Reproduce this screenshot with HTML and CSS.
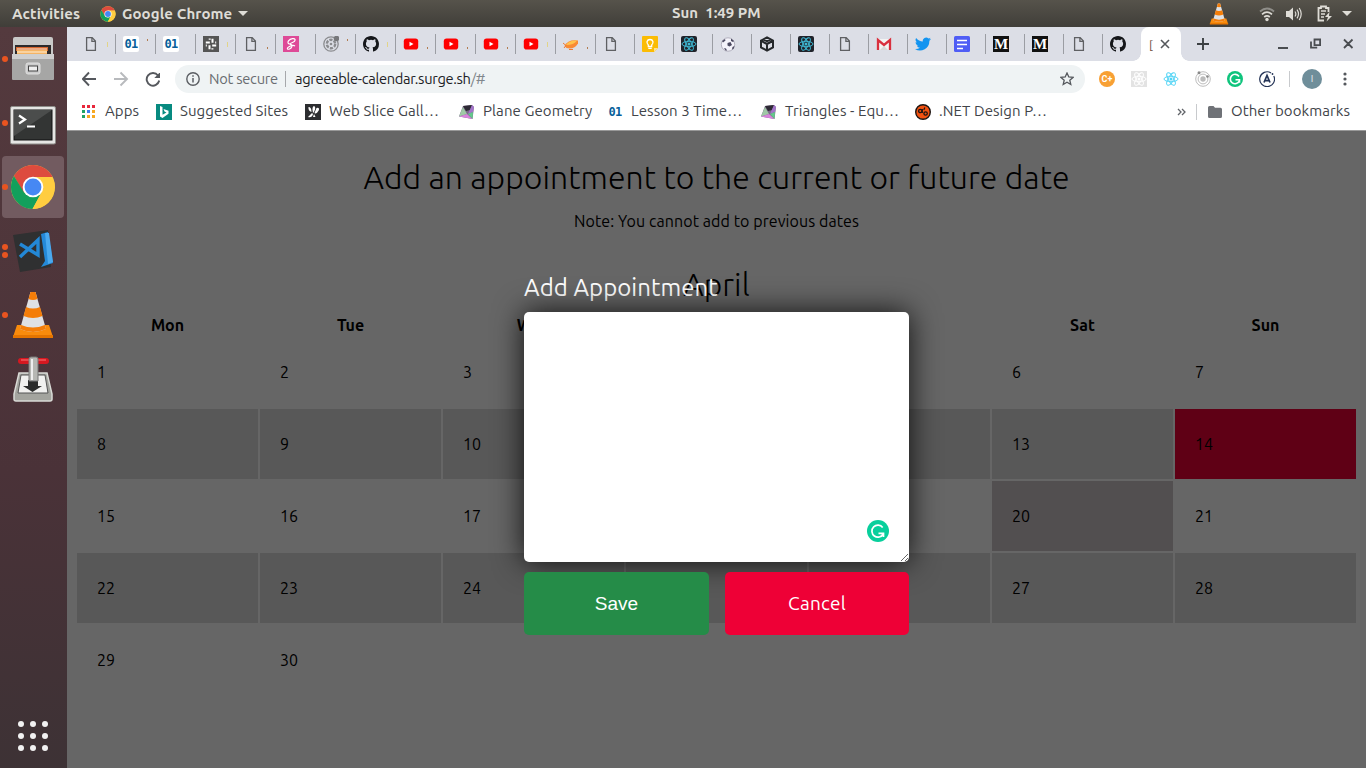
FILE: index.html
```html
<!DOCTYPE html>
<html lang="en">
<head>
<meta charset="utf-8">
<title>Calendar</title>
<link rel="stylesheet" href="styles.css">
</head>
<body>
<svg class="defs" width="0" height="0">
  <symbol id="page" viewBox="0 0 16 16"><path d="M3.6 1.6h5.600l3.200 3.400v9.400H3.600zM8.900 1.800v3.500h3.400" fill="none" stroke="#5f6063" stroke-width="1.300"/></symbol>
  <symbol id="slack" viewBox="0 0 16 16"><path fill="#555" d="M0 0h16v16H0z"/><path d="M6.700 2.500v1.200M2.800 6.500h4M9.500 2.800v4M12.200 6.500h1M9.400 13.500v-1.200M13.200 9.600h-4M6.500 13.200v-4M3.800 9.600h-1" fill="none" stroke="#fff" stroke-width="2"/></symbol>
  <symbol id="sass" viewBox="0 0 16 16"><path fill="#de4a97" d="M0 0h16v16H0z"/><path d="M6 8C3.500 6.500 6 3 9.500 2.600s3.500 2.600 0 3.900S6 8 8 8.500s1 3.500-1.500 4.500-3-1-.5-2.300 4-2 6-.7" fill="none" stroke="#fff" stroke-width="1.200"/></symbol>
  <symbol id="swirl" viewBox="0 0 16 16"><circle cx="8" cy="8" r="7.200" fill="none" stroke="#8b8c8f" stroke-width="1.300"/><circle cx="8" cy="8" r="4.200" fill="none" stroke="#8b8c8f" stroke-width="2.400" stroke-dasharray="3.200 1.200"/><circle cx="8" cy="8" r="1.300" fill="#8b8c8f"/><circle cx="13.500" cy="2.500" r="2.800" fill="#77787b"/></symbol>
  <symbol id="github" viewBox="0 0 16 16"><path fill="#15171a" d="M8 0C3.580 0 0 3.580 0 8c0 3.540 2.290 6.530 5.470 7.590.4.070.55-.17.55-.38 0-.19-.01-.82-.01-1.490-2.010.37-2.530-.49-2.690-.94-.09-.23-.48-.94-.82-1.130-.28-.15-.68-.52-.01-.53.63-.01 1.080.58 1.230.82.72 1.210 1.870.87 2.330.66.070-.52.28-.87.51-1.070-1.780-.2-3.640-.89-3.640-3.950 0-.87.31-1.590.82-2.150-.08-.2-.36-1.020.08-2.120 0 0 .67-.21 2.200.82a7.600 7.600 0 0 1 4 0c1.530-1.040 2.200-.82 2.200-.82.44 1.100.16 1.920.08 2.120.51.56.82 1.270.82 2.150 0 3.070-1.870 3.750-3.650 3.950.29.25.54.73.54 1.480 0 1.070-.01 1.930-.01 2.200 0 .21.15.46.55.38A8 8 0 0 0 16 8c0-4.420-3.580-8-8-8z"/></symbol>
  <symbol id="youtube" viewBox="0 0 16 16"><rect x=".8" y="2.500" width="14.400" height="11" rx="2.800" fill="#f00"/><path d="M6.500 5.700v4.600l4-2.300z" fill="#fff"/></symbol>
  <symbol id="zep" viewBox="0 0 16 16"><path d="M1.500 10Q5 3 15 4.500v3Q11 14 3.500 12z" fill="#f98a35"/><path d="M3 9q3-5 11-4.500Q11 9 3 9z" fill="#ffc34d"/><path d="M0 7l3 2.500L1 12M6 13.500h4" stroke="#ef7a33" fill="none"/></symbol>
  <symbol id="keep" viewBox="0 0 16 16"><path fill="#fbbc04" d="M0 1q0-1 1-1h14q1 0 1 1v11l-4 4H1q-1 0-1-1z"/><path fill="#fde293" d="M12 16v-4h4z"/><path d="M6.300 10.500V9C4 7 4.800 3.500 8 3.500S12 7 9.700 9v1.500zM6.300 12.300h3.400" fill="none" stroke="#fff" stroke-width="1.300"/></symbol>
  <symbol id="atom" viewBox="0 0 16 16"><g fill="none" stroke="currentColor" stroke-width=".95"><ellipse cx="8" cy="8" rx="7" ry="2.700"/><ellipse cx="8" cy="8" rx="7" ry="2.700" transform="rotate(60 8 8)"/><ellipse cx="8" cy="8" rx="7" ry="2.700" transform="rotate(120 8 8)"/></g><circle cx="8" cy="8" r="1.500" fill="currentColor"/></symbol>
  <symbol id="ball" viewBox="0 0 16 16"><circle cx="8" cy="8.500" r="6.700" fill="#f4f3fa" stroke="#8f8c9c" stroke-width=".6"/><path d="M7.500 7l3-1L12 9l-2.500 1.500L7.500 9.500zM2 5l3-2 .5 1.500L3 6.500zM11 2.500l3 2.500-1 1-2-1zM4 12l2 .5 1 2H5.500zM12.500 11l2-1-1 3-1.500.5z" fill="#4b4960"/></symbol>
  <symbol id="box" viewBox="0 0 16 16"><path d="M8 1.400l6 3.300v6.700L8 14.700l-6-3.300V4.700zM8 8v6M8 8l5.500-3M8 8L2.500 5M4.800 3.500L8 5.200l3.200-1.700" fill="none" stroke="#25282b" stroke-width="2"/></symbol>
  <symbol id="gmail" viewBox="0 0 16 16"><path fill="#f3f3f3" d="M1 3h14v11H1z"/><path d="M4 14l4-4 4 4z" fill="#d8d8d8"/><path d="M2 14V4l6 5 6-5v10" fill="none" stroke="#d9303e" stroke-width="2.300"/></symbol>
  <symbol id="twitter" viewBox="0 0 24 24"><path fill="#1394f0" d="M24 4.600a10 10 0 0 1-2.800.8 5 5 0 0 0 2.100-2.700 10 10 0 0 1-3.100 1.200 4.900 4.900 0 0 0-8.400 4.500A14 14 0 0 1 1.700 3.100a4.900 4.900 0 0 0 1.500 6.600 5 5 0 0 1-2.200-.6 4.900 4.900 0 0 0 4 4.900 5 5 0 0 1-2.300.1 4.900 4.900 0 0 0 4.600 3.400A10 10 0 0 1 0 19.500 14 14 0 0 0 21.500 7.100 10 10 0 0 0 24 4.600z"/></symbol>
  <symbol id="docs" viewBox="0 0 16 16"><rect width="16" height="16" rx="1.500" fill="#4f5df5"/><path d="M3 4.500h10M3 8.500h10M3 12.500h6" stroke="#fff" stroke-width="1.600"/></symbol>
  <symbol id="chrome" viewBox="0 0 48 48"><circle cx="24" cy="24" r="23" fill="#ffcd40"/><path d="M4.100 12.500A23 23 0 0 1 43.900 12.500L44 14H24L14 30z" fill="#dd4b3e"/><path d="M4.100 12.500L14.500 29.500 24 34.500 33 29.500 23.500 47A23 23 0 0 1 4.100 12.500z" fill="#12a05c"/><path d="M24 13.500h20A23 23 0 0 1 23.500 47L33 29.500z" fill="#ffcd40"/><circle cx="24" cy="24" r="10.800" fill="#fff"/><circle cx="24" cy="24" r="8.800" fill="#4688f4"/></symbol>
  <symbol id="cone" viewBox="0 0 42 48"><path d="M5 34h32l4 12H1z" fill="#f98b0c"/><path d="M1 44h40v3H1z" fill="#e47400"/><path d="M18.500 1h5L34 38q-13 6-26 0z" fill="#dfe1e4"/><path d="M18.500 1h5l2 7q-4.500 2-9 0zM14 16q7 3 14 0l2.500 9q-9.500 4-19 0zM9.200 34q11.800 5 23.600 0l1.200 4q-13 6-26 0z" fill="#f47d08"/></symbol>
  <symbol id="geo" viewBox="0 0 16 16"><path d="M0 12.500L4 2l9-1 2 2-1.500 12z" fill="#7a6a88"/><path d="M0 12.500L4 3l4 7z" fill="#9fc9a6"/><path d="M4 2l9-1-2 5-4 1z" fill="#2d2934"/><path d="M13 1l2 2-1 5-5 2z" fill="#a274c9"/><path d="M0 12.500l8-2.500 5.500 5z" fill="#d884dc"/><path d="M9 10l5-2-.5 7z" fill="#63c98b"/></symbol>
</svg>

<header class="topbar">
  <span class="activities">Activities</span>
  <svg class="mini-chrome"><use href="#chrome"/></svg>
  <span class="appname">Google Chrome</span>
  <i class="caret"></i>
  <span class="clock">Sun&nbsp; 1:49 PM</span>
  <div class="tray">
    <svg width="20" height="22"><use href="#cone"/></svg>
    <svg class="wifi" width="16" height="16" viewBox="0 0 16 16" fill="none"><path d="M1 5.500q7-6 14 0" stroke="#8f8e89" stroke-width="1.800"/><path d="M3 8.300q5-4.300 10 0M5.200 11q2.800-2.400 5.600 0" stroke="#dedcd6" stroke-width="1.700"/><circle cx="8" cy="13.500" r="1.700" fill="#dedcd6"/></svg>
    <svg class="sound" width="16" height="16" viewBox="0 0 16 16"><path d="M0 5h3l4-3.500v13L3 11H0z" fill="#dedcd6"/><path d="M9 5.500q1.700 2.500 0 5M11 3.700q3 4.300 0 8.600M13.200 2q4 6 0 12" stroke="#dedcd6" fill="none" stroke-width="1.200"/></svg>
    <svg class="battery" width="16" height="17" viewBox="0 0 16 17"><path d="M11.500 7V3H9V1.500H4V3H1.500v12.500H7" fill="none" stroke="#dedcd6" stroke-width="1.800"/><path d="M4 6h5M4 9h4M4 12h3" stroke="#dedcd6" stroke-width="1.500"/><path d="M12.500 7L8 12h3l-1.500 4.500L15 11h-3z" fill="#dedcd6"/></svg>
    <i class="caret"></i>
  </div>
</header>

<div class="desktop">
<nav class="dock">
  <div class="app one"><svg width="44" height="46" viewBox="0 0 44 46"><path d="M2 3q0-2 2-2h36q2 0 2 2v39H2z" fill="#c9c9c8"/><path d="M4 9h36v11H4z" fill="#2d2a2a"/><path d="M5 11h32v4H5z" fill="#d7662e"/><path d="M6 14h30v5H6z" fill="#f5b464"/><path d="M6 13h30M6 16h30" stroke="#fff0d8"/><path d="M1 18h42v25q0 1-1 1H2q-1 0-1-1z" fill="#a6a6a5"/><path d="M1 18h42v5H1z" fill="#cfcfcf"/><rect x="15" y="27" width="14" height="11" rx="2" fill="#ccc" stroke="#e0e0e0"/><rect x="17.500" y="30" width="9" height="5" fill="#eee" stroke="#444"/></svg></div>
  <div class="app one"><svg class="terminal" width="46" height="39" viewBox="0 0 46 39"><rect x=".5" y=".5" width="45" height="37.500" rx="1.500" fill="#e6e6e4" stroke="#8e8d89"/><rect x="4" y="4" width="38" height="30" fill="#333534" stroke="#111"/><path d="M4 4h38L4 30z" fill="#4b4d4c"/><path d="M9 9.500l6 4-6 4M17 20.500h8" stroke="#fff" stroke-width="2.200" fill="none"/></svg></div>
  <div class="app one active"><svg width="46" height="46"><use href="#chrome"/></svg></div>
  <div class="app two"><svg width="42" height="44" viewBox="0 0 42 44"><path d="M1 6L36 1l3 37-31 5z" fill="#2f3031"/><path d="M8 15l18 11V11L8 28" fill="none" stroke="#2388d6" stroke-width="3.400"/><path d="M29 5l7-2 5 31-12 4 4-6z" fill="#2489d8"/><path d="M33 4l4 0 4 29-5 2z" fill="#4aa9ee"/></svg></div>
  <div class="app one"><svg width="42" height="48"><use href="#cone"/></svg></div>
  <div class="app"><svg width="40" height="46" viewBox="0 0 40 46"><path d="M6 17h28l5 21v5q0 2-2 2H3q-2 0-2-2v-5z" fill="#a3a49e" stroke="#d9dad6" stroke-width="1.500"/><path d="M8 19h24l3 18H5z" fill="#f1f1ef" stroke="#555"/><rect x="5" y="2" width="31" height="6" rx="3" fill="#d51820"/><path d="M8 4h25" stroke="#f77"/><path d="M15 24h10v6h4l-9.500 6L10 30h5z" fill="#2b2c2b"/><path d="M16 3q0-2 2-2h5q2 0 2 2v22h-9z" fill="#b6b7b3" stroke="#777"/><path d="M19 3v21" stroke="#eee" stroke-width="2"/></svg></div>
  <svg class="grid-dots" width="31" height="31" fill="#f2f2f2"><g id="r"><circle cx="3" cy="3" r="3"/><circle cx="15" cy="3" r="3"/><circle cx="27" cy="3" r="3"/></g><use href="#r" y="12"/><use href="#r" y="24"/></svg>
</nav>

<main class="window">
  <div class="tabs">
    <div class="tab"><svg><use href="#page"/></svg><i class="y"></i></div>
    <div class="tab"><b class="lesson">01</b><i class="up"></i></div>
    <div class="tab"><b class="lesson">01</b></div>
    <div class="tab"><svg><use href="#slack"/></svg><i class="y"></i></div>
    <div class="tab"><svg><use href="#page"/></svg><i></i></div>
    <div class="tab"><svg><use href="#sass"/></svg></div>
    <div class="tab"><svg><use href="#swirl"/></svg><i class="up"></i></div>
    <div class="tab"><svg><use href="#github"/></svg><i class="y"></i></div>
    <div class="tab"><svg><use href="#youtube"/></svg><i></i></div>
    <div class="tab"><svg><use href="#youtube"/></svg><i></i></div>
    <div class="tab"><svg><use href="#youtube"/></svg><i></i></div>
    <div class="tab"><svg><use href="#youtube"/></svg><i class="y"></i></div>
    <div class="tab"><svg><use href="#zep"/></svg><i></i></div>
    <div class="tab slim"><svg><use href="#page"/></svg></div>
    <div class="tab slim"><svg><use href="#keep"/></svg></div>
    <div class="tab slim"><svg class="react"><use href="#atom"/></svg></div>
    <div class="tab slim"><svg><use href="#ball"/></svg></div>
    <div class="tab slim"><svg><use href="#box"/></svg></div>
    <div class="tab slim"><svg class="react"><use href="#atom"/></svg></div>
    <div class="tab slim"><svg><use href="#page"/></svg></div>
    <div class="tab slim"><svg><use href="#gmail"/></svg></div>
    <div class="tab slim"><svg><use href="#twitter"/></svg></div>
    <div class="tab slim"><svg><use href="#docs"/></svg></div>
    <div class="tab slim"><b class="medium">M</b></div>
    <div class="tab slim"><b class="medium">M</b></div>
    <div class="tab slim"><svg><use href="#page"/></svg></div>
    <div class="tab slim last"><svg><use href="#github"/></svg></div>
    <div class="tab-active"><span>[</span><svg width="10" height="10" viewBox="0 0 10 10"><path d="M1 1l8 8M9 1L1 9" stroke="#55585c" stroke-width="1.600"/></svg></div>
    <svg class="plus" width="12" height="12" viewBox="0 0 12 12"><path d="M6 0v12M0 6h12" stroke="#3c4043" stroke-width="1.900"/></svg>
    <svg class="wincontrols" width="76" height="12" viewBox="0 0 76 12" fill="none" stroke="#4a4d51" stroke-width="1.800"><path d="M0 10h10M36.500 1.500h5.600v5.600h-5.600zM33 3.500v6.100h6.200M66 1.500l8.500 8.500M74.500 1.500L66 10"/></svg>
  </div>

  <div class="toolbar">
    <svg class="nav" width="78" height="16" viewBox="0 0 78 16" fill="none" stroke="#55585d" stroke-width="1.900"><path d="M14 8H1M7 1.500L.8 8 7 14.500"/><path d="M32 8h13M38.500 1.500L45 8l-6.500 6.500" stroke="#b8babd"/><path d="M76 4.500A6.300 6.300 0 1 0 77.200 9.500"/><path d="M78.300 1v6h-6z" fill="#55585d" stroke="none"/></svg>
    <div class="omnibox">
      <svg width="14" height="14" viewBox="0 0 14 14"><circle cx="7" cy="7" r="6.200" fill="none" stroke="#5b5e63" stroke-width="1.400"/><path d="M7 6v4.500M7 3.300v1.500" stroke="#5b5e63" stroke-width="1.500"/></svg>
      <span class="secure">Not secure</span><span class="bar"></span><span class="url">agreeable-calendar.surge.sh<em>/#</em></span>
      <svg class="star" width="14" height="14" viewBox="0 0 14 14"><path d="M7 1l1.800 4 4.200.4-3.200 2.800 1 4.300L7 10.300l-3.800 2.200 1-4.300L1 5.400 5.200 5z" fill="none" stroke="#55585d" stroke-width="1.300"/></svg>
    </div>
    <div class="exts">
      <span class="ext orange">C+</span>
      <svg class="ghost"><use href="#atom"/></svg>
      <svg class="cyan"><use href="#atom"/></svg>
      <svg viewBox="0 0 16 16"><g fill="none" stroke="#bdbdbd"><circle cx="8" cy="8" r="7.300"/><circle cx="8" cy="8" r="4.900"/></g><circle cx="8" cy="8" r="2.700" fill="#bbb"/><circle cx="4" cy="1.800" r="1.500" fill="#888"/><circle cx="12.500" cy="5.500" r="1.300" fill="#888"/></svg>
      <svg viewBox="0 0 16 16"><circle cx="8" cy="8" r="8" fill="#0fc47d"/><path d="M12 5.500A4.700 4.700 0 1 0 12.300 10M8.500 8.700H12.500v3" fill="none" stroke="#fff" stroke-width="1.600"/></svg>
      <svg viewBox="0 0 16 16"><path d="M14.800 5A7.400 7.400 0 1 1 12 1.900" fill="none" stroke="#253457" stroke-width="1.200"/><path d="M5 11.500L8 4.500 11 11.500M6.200 9.600h3.600" fill="none" stroke="#253457" stroke-width="1.700"/><circle cx="13.500" cy="3" r=".9" fill="#253457"/></svg>
    </div>
    <span class="divider"></span>
    <span class="avatar">I</span>
    <svg class="kebab" width="4" height="14" fill="#55585d"><circle cx="2" cy="2" r="1.600"/><circle cx="2" cy="7" r="1.600"/><circle cx="2" cy="12" r="1.600"/></svg>
  </div>

  <div class="bookmarks">
    <div class="bm w1"><svg viewBox="0 0 16 16"><path fill="#e8273b" d="M1 1h3v3H1zM6 1h3v3H6zM11 1h3v3h-3z"/><path fill="#21a366" d="M1 6h3v3H1zM1 11h3v3H1z"/><path fill="#3f7df0" d="M6 6h3v3H6z"/><path fill="#f7a820" d="M11 6h3v3h-3zM6 11h3v3H6zM11 11h3v3h-3z"/></svg><span>Apps</span></div>
    <div class="bm w2"><svg viewBox="0 0 16 16"><path fill="#078a80" d="M0 0h16v16H0z"/><path d="M4 2l2.500 1v7.800l4-2.300-2-1-1-2.500 5 1.800v3L6.500 14 4 12.500z" fill="#fff"/></svg><span>Suggested Sites</span></div>
    <div class="bm w3"><svg viewBox="0 0 16 16"><path fill="#2c2d30" d="M0 0h16v16H0z"/><path d="M3.500 3q3 0 3 5Q3 7 3.500 3zM8 9Q6.500 3 9 2q2.500 1 0 6zM11.500 4q3-1 2.500 2-3 5-4.500 3zM7 9l-4 4q4 1 5-3zM9 10l1.500 3H8z" fill="#fff"/></svg><span>Web Slice Gall…</span></div>
    <div class="bm w4"><svg><use href="#geo"/></svg><span>Plane Geometry</span></div>
    <div class="bm w5"><b class="lesson">01</b><span>Lesson 3 Time…</span></div>
    <div class="bm w6"><svg><use href="#geo"/></svg><span>Triangles - Equ…</span></div>
    <div class="bm w7"><svg viewBox="0 0 16 16"><circle cx="8" cy="8" r="7.300" fill="#f25211" stroke="#1c1513" stroke-width="1.400"/><circle cx="5.300" cy="7" r="1.700" fill="none" stroke="#1c1513" stroke-width="1.300"/><circle cx="10.600" cy="9.500" r="1.700" fill="none" stroke="#1c1513" stroke-width="1.300"/><path d="M7.300 5v4M8.800 6l1-2.500" stroke="#1c1513" stroke-width="1.200"/></svg><span>.NET Design P…</span></div>
    <svg class="chev" width="9" height="8" viewBox="0 0 9 8"><path d="M1 1l3 3-3 3M5 1l3 3-3 3" fill="none" stroke="#606368" stroke-width="1.300"/></svg>
    <span class="divider"></span>
    <svg class="folder" width="14" height="12" viewBox="0 0 14 12"><path d="M0 1.500Q0 0 1.500 0h4L7 1.700h5.500q1.500 0 1.500 1.500v7.300q0 1.500-1.500 1.500h-11Q0 12 0 10.500z" fill="#6f7277"/></svg>
    <span class="other">Other bookmarks</span>
  </div>

  <section class="page">
    <h1>Add an appointment to the current or future date</h1>
    <p class="note">Note: You cannot add to previous dates</p>
    <h2>April</h2>
    <div class="days head"><b>Mon</b><b>Tue</b><b>Wed</b><b>Thu</b><b>Fri</b><b>Sat</b><b>Sun</b></div>
    <div class="days">
      <span>1</span><span>2</span><span>3</span><span>4</span><span>5</span><span>6</span><span>7</span>
      <span class="alt">8</span><span class="alt">9</span><span class="alt">10</span><span class="alt">11</span><span class="alt">12</span><span class="alt">13</span><span class="today">14</span>
      <span>15</span><span>16</span><span>17</span><span>18</span><span>19</span><span class="picked">20</span><span>21</span>
      <span class="alt">22</span><span class="alt">23</span><span class="alt">24</span><span class="alt">25</span><span class="alt">26</span><span class="alt">27</span><span class="alt">28</span>
      <span>29</span><span>30</span>
    </div>
    <div class="overlay">
      <form class="modal">
        <label>Add Appointment</label>
        <div class="field">
          <textarea></textarea>
          <svg class="grammarly" width="22" height="22" viewBox="0 0 22 22"><circle cx="11" cy="11" r="11" fill="#08cf9c"/><path d="M15.700 7.500A6 6 0 1 0 16.200 14M11.500 13.400h5v3.600" fill="none" stroke="#fff" stroke-width="1.700"/></svg>
        </div>
        <div class="actions"><button type="button" class="save">Save</button><a class="cancel">Cancel</a></div>
      </form>
    </div>
  </section>
</main>
</div>
</body>
</html>
```
FILE: styles.css
```css
* { box-sizing: border-box; }
body { margin: 0; width: 1366px; height: 768px; overflow: hidden; font-family: Ubuntu, "Noto Sans", "Open Sans", sans-serif; white-space: nowrap; }
.defs { position: absolute; }
svg { display: block; flex: none; }

.topbar { height: 27px; display: flex; align-items: center; padding-left: 12px; background: linear-gradient(#56534b, #403e39); color: #dedcd6; font-size: 15px; font-weight: 700; }
.activities { width: 88px; letter-spacing: .15px; }
.mini-chrome { width: 16px; height: 16px; }
.appname { margin-left: 6px; width: 116px; letter-spacing: .1px; }
.caret { border: 5px solid transparent; border-top-color: #dedcd6; border-bottom: 0; }
.clock { margin-left: 424px; width: 90px; line-height: 18px; padding-bottom: 1px; }
.tray { display: flex; align-items: center; margin-left: 447px; }
.wifi { margin-left: 30px; }
.sound { margin-left: 11px; }
.battery { margin: 0 9px 0 15px; }

.desktop { display: flex; height: 741px; }
.dock { width: 67px; background: linear-gradient(#543a3e, #4a3238 60%, #3d3235); display: flex; flex-direction: column; align-items: center; padding-top: 1px; }
.app { width: 62px; height: 62px; margin: 0 3px 2px 2px; display: flex; align-items: center; justify-content: center; border-radius: 4px; position: relative; }
.app.active { background: #725b60; }
.app.one::before, .app.two::before { content: ""; position: absolute; left: 0; top: 28px; width: 6px; height: 6px; border-radius: 50%; background: #e95420; }
.app.two::before { top: 24px; box-shadow: 0 8px #e95420; }
.terminal { margin-top: 5px; }
.grid-dots { margin: auto 0 16px 0; }

.window { width: 1299px; display: flex; flex-direction: column; background: #fff; }
.tabs { height: 34px; display: flex; align-items: center; background: #dcdee6; padding-left: 9px; }
.tab { width: 40px; height: 20px; flex: none; border-right: 1px solid #9b9da3; padding-left: 7px; display: flex; align-items: center; }
.tab.slim { width: 39px; }
.tab.last { width: 38px; border: 0; }
.tab svg { width: 16px; height: 16px; }
.tab i { width: 1px; height: 2px; margin: 8px 0 0 8px; background: #b27c50; }
.tab i.y { background: #e2d489; height: 5px; margin-top: 0; }
.tab i.up { margin-top: -8px; }
.tab svg.react { background: #20232a; color: #3fbbd6; border-radius: 2px; }
.lesson { width: 16px; height: 16px; background: #fff; color: #07609a; border-radius: 2px; font: 700 12px/16px "DejaVu Sans Mono", monospace; letter-spacing: -.8px; text-align: center; }
.medium { width: 16px; height: 16px; background: #111; color: #fff; font: 700 15px/16px "Liberation Serif", serif; text-align: center; }
.tab-active { width: 40px; height: 34px; background: #fff; border-radius: 8px 8px 0 0; display: flex; align-items: center; padding-left: 8px; font-size: 12px; color: #6b4a3a; position: relative; }
.tab-active::before, .tab-active::after { content: ""; position: absolute; bottom: 0; width: 8px; height: 8px; }
.tab-active::before { left: -8px; background: radial-gradient(circle at 0 0, #dcdee6 7.5px, #fff 8px); }
.tab-active::after { right: -8px; background: radial-gradient(circle at 100% 0, #dcdee6 7.5px, #fff 8px); }
.tab-active span { width: 11px; }
.plus { margin-left: 16px; }
.wincontrols { margin-left: 69px; }

.toolbar { height: 36px; display: flex; align-items: center; padding-left: 15px; font-size: 14.67px; }
.omnibox { width: 910px; height: 28px; margin-left: 15px; border-radius: 14px; background: #eff3f4; display: flex; align-items: center; padding-left: 11px; }
.secure, .url { line-height: 18px; padding-bottom: 1px; }
.secure { margin-left: 9px; width: 76px; color: #6a6d71; letter-spacing: -.25px; }
.bar { width: 1px; height: 16px; background: #a6a8ab; }
.url { margin-left: 9px; width: 765px; letter-spacing: -.32px; color: #202124; }
.url em { font-style: normal; color: #80868b; }
.exts { display: flex; gap: 16px; margin-left: 14px; }
.exts svg, .ext { width: 16px; height: 16px; }
.orange { background: #f8a034; color: #fff; border-radius: 50%; font: 700 9px/16px Roboto, sans-serif; text-align: center; }
.ghost { background: #e3e3e3; color: #fff; }
.cyan { color: #53d4f5; }
.toolbar .divider { margin-left: 14px; }
.divider { width: 1px; height: 16px; background: #c8cacd; flex: none; }
.avatar { margin-left: 12px; width: 20px; height: 20px; border-radius: 50%; background: #6f8e9a; color: #e8eef0; font-size: 10px; line-height: 20px; text-align: center; }
.kebab { margin-left: 21px; }

.bookmarks { height: 33px; display: flex; align-items: center; padding: 0 0 3px 14px; color: #414449; font-size: 15px; letter-spacing: .08px; }
.bm { display: flex; align-items: center; flex: none; }
.bm svg { width: 16px; height: 16px; }
.bm span { margin-left: 8px; }
.bm span, .other { line-height: 18px; padding-bottom: 2px; }
.w1 { width: 75px; } .w2 { width: 149px; } .w3 { width: 154px; } .w4 { width: 148px; } .w5 { width: 154px; } .w6 { width: 154px; } .w7 { width: 262px; }
.chev { width: 9px; margin-right: 10px; }
.folder { margin-left: 11px; }
.other { margin-left: 9px; }

.page { height: 638px; position: relative; background: #fff; padding: 0 10px; color: #000; }
h1, h2 { margin: 0; font-size: 32px; font-weight: 300; line-height: 38px; text-align: center; }
h1 { padding-top: 28px; height: 66px; letter-spacing: .06px; }
.note { margin: 15px 0 0; font-size: 16px; line-height: 20px; text-align: center; letter-spacing: .08px; }
h2 { margin-top: 34px; }
.days { display: grid; grid-template-columns: repeat(7, 181px); grid-auto-rows: 70px; gap: 2px; font-size: 16px; line-height: 70px; }
.head { grid-auto-rows: 34px; line-height: 44px; text-align: center; }
.days span { padding-left: 20px; }
.alt { background: #dcdcdc; }
.today { background: #ee0036; }
.picked { background: #cdc6c7; }
.overlay { position: absolute; inset: 0; border-top: 1px solid #999; background: rgba(0, 0, 0, .6); display: flex; justify-content: center; padding-top: 141px; }
.modal { width: 385px; display: flex; flex-direction: column; }
.modal label { height: 40px; line-height: 32px; font-size: 24px; letter-spacing: .06px; color: #fff; }
.field { height: 250px; position: relative; }
textarea { display: block; width: 385px; height: 250px; border: 0; border-radius: 5px; background: #fff; box-shadow: 0 0 30px rgba(0, 0, 0, .85); padding: 20px; }
.grammarly { position: absolute; right: 20px; bottom: 20px; }
.actions { display: flex; justify-content: space-between; margin-top: 10px; position: relative; }
.save, .cancel { width: 185px; height: 63px; border: 0; border-radius: 5px; color: #fff; font-size: 19px; line-height: 62px; text-align: center; padding: 0; }
.save { background: #258c48; font-family: "Liberation Sans", Arial, sans-serif; }
.cancel { width: 184px; background: #ee0036; letter-spacing: .25px; }
```
